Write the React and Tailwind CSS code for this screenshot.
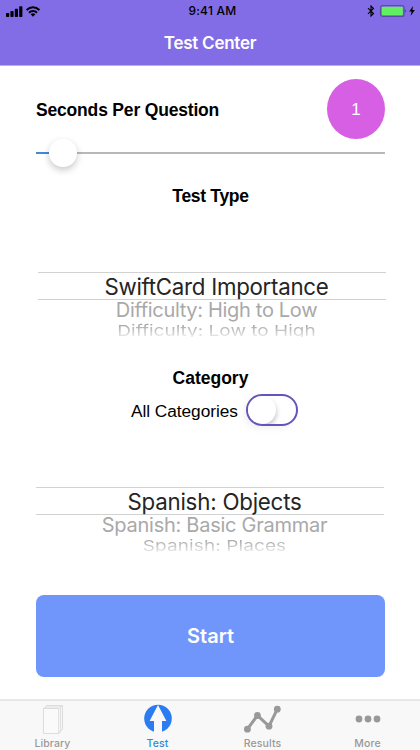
import React from "react";

function StatusBar() {
  return (
    <div className="relative flex h-[22px] items-center justify-between pl-[6px] pr-[5px] text-black">
      <div className="flex items-center gap-[3px]">
        <svg width="17" height="11" viewBox="0 0 17 11" fill="currentColor">
          <rect x="0" y="7" width="3.2" height="4" rx="0.7" />
          <rect x="4.4" y="5" width="3.2" height="6" rx="0.7" />
          <rect x="8.8" y="2.7" width="3.2" height="8.3" rx="0.7" />
          <rect x="13.2" y="0.3" width="3.2" height="10.7" rx="0.7" />
        </svg>
        <svg width="14" height="11" viewBox="0 0 14 11" fill="none" stroke="currentColor" strokeWidth="2">
          <path d="M0.6 4.1C4.2 0.3 9.8 0.3 13.4 4.1" />
          <path d="M3 6.7C5.2 4.4 8.8 4.4 11 6.7" />
          <path d="M7 10.7L4.6 8.2C5.9 6.9 8.1 6.9 9.4 8.2Z" fill="currentColor" stroke="none" />
        </svg>
      </div>
      <span className="absolute inset-x-0 top-[1px] pl-[5px] text-center text-[12px] font-medium leading-[20px] tracking-[0.25px]">
        9:41 AM
      </span>
      <div className="flex items-center">
        <svg width="8" height="12" viewBox="0 0 8 12" fill="none" stroke="currentColor" strokeWidth="1.1">
          <path d="M1 3.2L6.5 8.5L4 11V1L6.5 3.5L1 8.8" />
        </svg>
        <svg className="ml-[5px]" width="27" height="12" viewBox="0 0 27 12">
          <rect x="0.6" y="0.6" width="23.4" height="10.8" rx="2" fill="none" stroke="#5b4aa8" strokeWidth="1.2" />
          <rect x="1.8" y="1.7" width="21" height="8.6" rx="0.8" fill="#62ef62" />
          <path d="M24.8 4V8Q26.3 7.2 26.3 6T24.8 4Z" fill="#5b4aa8" />
        </svg>
        <svg className="ml-[2px]" width="6" height="10" viewBox="0 0 6 10" fill="currentColor">
          <path d="M4.1 0L0.2 5.6H2.6L1.6 10L5.8 4.1H3.4Z" />
        </svg>
      </div>
    </div>
  );
}

function Heading({ children, className = "" }) {
  return (
    <h2 className={`whitespace-nowrap font-['Liberation_Sans',Arial,sans-serif] font-bold leading-[20px] text-black ${className}`}>
      {children}
    </h2>
  );
}

function Picker({ rows, className, tracking }) {
  return (
    <div className={`flex w-[348px] flex-col whitespace-nowrap text-center ${className}`}>
      <div className={`h-[28px] border-y border-[#d2d2d2] pl-[9px] text-[22.3px] leading-[27px] text-[#252525] ${tracking[0]}`}>
        {rows[0]}
      </div>
      <div className={`h-[21px] pl-[9px] text-[20px] leading-[21px] text-[#a9a9a9] ${tracking[1]}`}>{rows[1]}</div>
      <div className="h-[16px] overflow-hidden pl-[9px]">
        <div className={`h-[21px] origin-top scale-y-[0.78] bg-linear-to-b from-[#a8a8a8] from-25% to-[#ececec] bg-clip-text text-[19px] leading-[26px] text-transparent ${tracking[2]}`}>
          {rows[2]}
        </div>
      </div>
    </div>
  );
}

function Tab({ label, children, className }) {
  return (
    <div className={`flex w-[105px] flex-col items-center ${className}`}>
      <div className="flex h-[37px] items-center justify-center">{children}</div>
      <span className="text-[10.5px] font-medium leading-[13px] tracking-[0.1px]">{label}</span>
    </div>
  );
}

export default function App() {
  return (
    <div className="flex h-[750px] w-[420px] flex-col overflow-hidden bg-white font-['Inter',sans-serif]">
      <header className="h-[66px] shrink-0 border-b border-[#b9aef0] bg-[#826de6]">
        <StatusBar />
        <h1 className="pt-[10px] text-center text-[17px] font-semibold leading-[22px] tracking-[-0.25px] text-white">
          Test Center
        </h1>
      </header>

      <main className="flex h-[633px] shrink-0 flex-col pl-[36px] pr-[35px]">
        <div className="mt-[13px] flex h-[60px] items-center justify-between">
          <Heading className="pt-px text-[17.5px] tracking-[-0.18px]">Seconds Per Question</Heading>
          <div className="flex h-[60px] w-[58px] items-center justify-center rounded-[50%] bg-[#d75fe3] pt-px font-['Liberation_Sans',Arial,sans-serif] text-[17px] text-white">
            1
          </div>
        </div>

        <div className="flex h-[28px] items-center">
          <div className="h-[2px] w-[13px] bg-[#3f8bd6]" />
          <div className="z-10 h-[28px] w-[28px] rounded-full bg-white shadow-[0_3px_7px_rgba(0,0,0,0.22)]" />
          <div className="h-[2px] flex-1 bg-[#b8b8b8]" />
        </div>

        <Heading className="mt-[19px] text-center text-[17.5px] tracking-[-0.3px]">Test Type</Heading>
        <Picker
          className="mt-[66px] ml-[2px]"
          rows={["SwiftCard Importance", "Difficulty: High to Low", "Difficulty: Low to High"]}
          tracking={["tracking-[-0.28px]", "tracking-[-0.32px]", "tracking-[0px]"]}
        />

        <Heading className="mt-[30px] pt-px text-center text-[17.5px]">Category</Heading>
        <div className="mt-[6px] flex h-[32px] items-center pl-[95px]">
          <span className="w-[115px] whitespace-nowrap pt-[3px] font-['Liberation_Sans',Arial,sans-serif] text-[17.3px] tracking-[-0.05px] text-black">
            All Categories
          </span>
          <div className="h-[32px] w-[52px] rounded-full border-2 border-[#6654bd] bg-white shadow-[-3px_3px_6px_rgba(0,0,0,0.05)]">
            <div className="relative h-[28px] w-[48px] overflow-hidden rounded-full">
              <div className="h-[28px] w-[28px] rounded-full bg-white shadow-[1px_3px_4px_rgba(0,0,0,0.2)]" />
            </div>
          </div>
        </div>

        <Picker
          className="mt-[61px]"
          rows={["Spanish: Objects", "Spanish: Basic Grammar", "Spanish: Places"]}
          tracking={["tracking-[-0.22px]", "tracking-[-0.26px]", "tracking-[0.1px]"]}
        />

        <button className="mt-[43px] h-[82px] w-full shrink-0 rounded-[8px] bg-[#7096fb] text-[20px] font-semibold text-white">
          Start
        </button>
      </main>

      <nav className="flex h-[51px] shrink-0 border-t-2 border-[#e7e7e7] bg-[#f8f8f8] text-[#999999]">
        <Tab label="Library">
          <svg width="22" height="31" viewBox="0 0 22 31" fill="#fafafa" stroke="#dddddd" strokeWidth="1">
            <path d="M5 1.5H20.5V25L17 29.5" />
            <path d="M3.2 3H18.7V27L16 29.5" />
            <path d="M1.5 4.5H16.7V29.5H1.5Z" />
            <path d="M1.5 4.5L5 1.5M16.7 4.5L20.5 1.5" />
          </svg>
        </Tab>
        <Tab label="Test" className="text-[#338ad3]">
          <svg width="28" height="30" viewBox="0 0 28 30">
            <circle cx="14" cy="14.6" r="13.8" fill="#2b7cf0" />
            <path d="M14 1L22.4 17H18V30H10V17H5.6Z" fill="#f8f8f8" />
          </svg>
        </Tab>
        <Tab label="Results">
          <svg width="38" height="28" viewBox="0 0 38 28" fill="#999" stroke="#999" strokeWidth="3">
            <path d="M3.4 24.2L13.4 10.5L25 21.2L33.3 4.2" fill="none" />
            <g stroke="none">
              <circle cx="3.4" cy="24.2" r="3.4" />
              <circle cx="13.4" cy="10.5" r="3.4" />
              <circle cx="25" cy="21.2" r="3.4" />
              <circle cx="33.3" cy="4.2" r="3.4" />
            </g>
          </svg>
        </Tab>
        <Tab label="More">
          <svg width="26" height="8" viewBox="0 0 26 8" fill="#999">
            <circle cx="4" cy="4" r="3.4" />
            <circle cx="13" cy="4" r="3.4" />
            <circle cx="22" cy="4" r="3.4" />
          </svg>
        </Tab>
      </nav>
    </div>
  );
}
